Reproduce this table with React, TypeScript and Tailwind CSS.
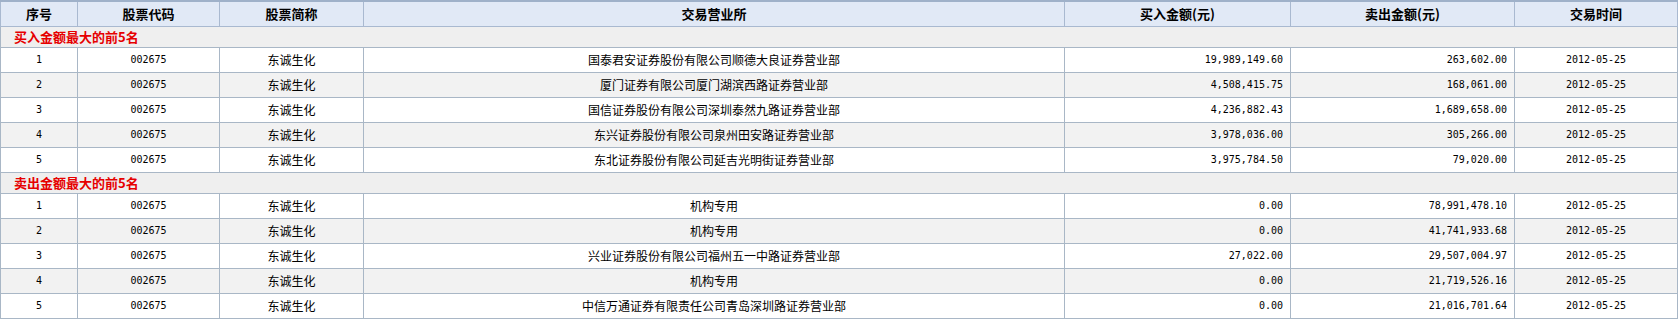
const buyRows = [
  { no: 1, dept: "国泰君安证券股份有限公司顺德大良证券营业部", buy: "19,989,149.60", sell: "263,602.00" },
  { no: 2, dept: "厦门证券有限公司厦门湖滨西路证券营业部", buy: "4,508,415.75", sell: "168,061.00" },
  { no: 3, dept: "国信证券股份有限公司深圳泰然九路证券营业部", buy: "4,236,882.43", sell: "1,689,658.00" },
  { no: 4, dept: "东兴证券股份有限公司泉州田安路证券营业部", buy: "3,978,036.00", sell: "305,266.00" },
  { no: 5, dept: "东北证券股份有限公司延吉光明街证券营业部", buy: "3,975,784.50", sell: "79,020.00" },
];

const sellRows = [
  { no: 1, dept: "机构专用", buy: "0.00", sell: "78,991,478.10" },
  { no: 2, dept: "机构专用", buy: "0.00", sell: "41,741,933.68" },
  { no: 3, dept: "兴业证券股份有限公司福州五一中路证券营业部", buy: "27,022.00", sell: "29,507,004.97" },
  { no: 4, dept: "机构专用", buy: "0.00", sell: "21,719,526.16" },
  { no: 5, dept: "中信万通证券有限责任公司青岛深圳路证券营业部", buy: "0.00", sell: "21,016,701.64" },
];

const headers = ["序号", "股票代码", "股票简称", "交易营业所", "买入金额(元)", "卖出金额(元)", "交易时间"];

type Row = { no: number; dept: string; buy: string; sell: string };

const mono = "font-['DejaVu_Sans_Mono',monospace] text-[10px]";
const cjk = "font-['Noto_Sans_CJK_SC',sans-serif] text-[12px]";
const cell = "border border-[#a9b7c6] p-0 h-[25px] text-black";

function DataRow({ row }: { row: Row }) {
  const bg = row.no % 2 === 0 ? "bg-[#f2f2f2]" : "bg-white";
  return (
    <tr className={bg}>
      <td className={`${cell} ${mono} text-center`}>{row.no}</td>
      <td className={`${cell} ${mono} text-center`}>002675</td>
      <td className={`${cell} ${cjk} text-center`}>东诚生化</td>
      <td className={`${cell} ${cjk} text-center`}>{row.dept}</td>
      <td className={`${cell} ${mono} text-right pr-[7px]`}>{row.buy}</td>
      <td className={`${cell} ${mono} text-right pr-[7px]`}>{row.sell}</td>
      <td className={`${cell} ${mono} text-center`}>2012-05-25</td>
    </tr>
  );
}

function Section({ title }: { title: string }) {
  return (
    <tr className="bg-[#efefef]">
      <td
        colSpan={7}
        className="border border-[#a9b7c6] h-[21px] p-0 pl-[13px] text-left font-['Noto_Sans_CJK_SC',sans-serif] text-[13px] font-bold text-[#e60000]"
      >
        {title}
      </td>
    </tr>
  );
}

export default function App() {
  return (
    <div className="w-[1680px] h-[319px] bg-white">
      <table className="w-[1678px] table-fixed border-collapse border-x border-x-[#555] border-t-2 border-t-[#9fb1c9] border-b border-b-[#a9b7c6] leading-none">
        <colgroup>
          <col className="w-[77px]" />
          <col className="w-[142px]" />
          <col className="w-[144px]" />
          <col className="w-[701px]" />
          <col className="w-[226px]" />
          <col className="w-[224px]" />
          <col />
        </colgroup>
        <thead>
          <tr className="bg-[#e1e9f6]">
            {headers.map((h) => (
              <th
                key={h}
                className="border border-[#a9b9d0] h-[25px] p-0 text-center font-['Noto_Sans_CJK_SC',sans-serif] text-[13px] font-bold text-black"
              >
                {h}
              </th>
            ))}
          </tr>
        </thead>
        <tbody>
          <Section title="买入金额最大的前5名" />
          {buyRows.map((r) => (
            <DataRow key={"b" + r.no} row={r} />
          ))}
          <Section title="卖出金额最大的前5名" />
          {sellRows.map((r) => (
            <DataRow key={"s" + r.no} row={r} />
          ))}
        </tbody>
      </table>
    </div>
  );
}
